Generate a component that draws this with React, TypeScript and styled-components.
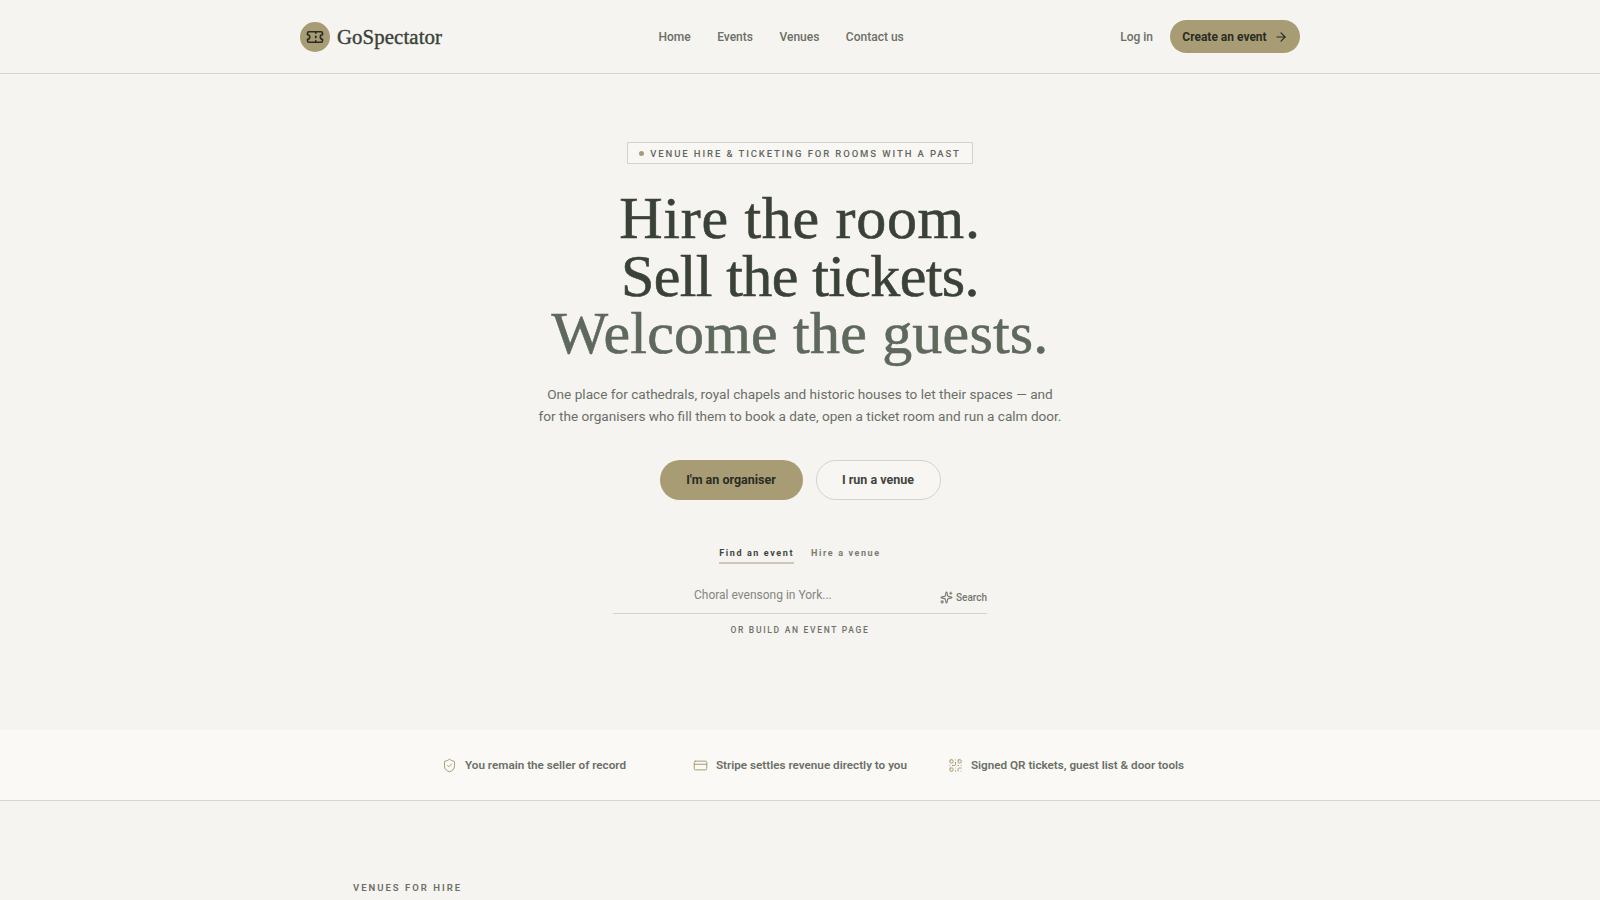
import styled, { createGlobalStyle } from 'styled-components';
import { ArrowRight, CreditCard, QrCode, ShieldCheck, Sparkles, Ticket } from 'lucide-react';

const sans = `Roboto, "Noto Sans", "Liberation Sans", sans-serif`;
const serif = `"Liberation Serif", "DejaVu Serif", serif`;

const GlobalStyle = createGlobalStyle`
  html, body {
    margin: 0;
    padding: 0;
    background: #f5f4f0;
    color: #3a4238;
    font-family: ${sans};
  }
  * {
    box-sizing: border-box;
  }
`;

function App() {
  return (
    <Page>
      <GlobalStyle />
      <Header>
        <HeaderInner>
          <Brand>
            <BrandMark>
              <Ticket size={18} strokeWidth={2.2} />
            </BrandMark>
            <BrandName>GoSpectator</BrandName>
          </Brand>
          <Nav>
            <NavLink>Home</NavLink>
            <NavLink>Events</NavLink>
            <NavLink>Venues</NavLink>
            <NavLink>Contact us</NavLink>
          </Nav>
          <HeaderActions>
            <NavLink>Log in</NavLink>
            <CreateButton>
              Create an event
              <ArrowRight size={14} strokeWidth={2} />
            </CreateButton>
          </HeaderActions>
        </HeaderInner>
      </Header>

      <Hero>
        <Eyebrow>
          <EyebrowDot />
          VENUE HIRE &amp; TICKETING FOR ROOMS WITH A PAST
        </Eyebrow>
        <Headline>
          <HeadlineLine $tracking={0.7}>Hire the room.</HeadlineLine>
          <HeadlineLine $tracking={-0.6}>Sell the tickets.</HeadlineLine>
          <HeadlineLine $tracking={0.2} $soft>
            Welcome the guests.
          </HeadlineLine>
        </Headline>
        <Lead>
          One place for cathedrals, royal chapels and historic houses to let their spaces — and
          <br />
          for the organisers who fill them to book a date, open a ticket room and run a calm door.
        </Lead>
        <HeroButtons>
          <PrimaryButton>I'm an organiser</PrimaryButton>
          <GhostButton>I run a venue</GhostButton>
        </HeroButtons>
        <Tabs>
          <Tab $active>Find an event</Tab>
          <Tab>Hire a venue</Tab>
        </Tabs>
        <SearchRow>
          <SearchPlaceholder>Choral evensong in York...</SearchPlaceholder>
          <SearchButton>
            <Sparkles size={13} strokeWidth={2} />
            Search
          </SearchButton>
        </SearchRow>
        <BuildLink>OR BUILD AN EVENT PAGE</BuildLink>
      </Hero>

      <TrustBand>
        <TrustItem>
          <ShieldCheck size={15} strokeWidth={1.6} />
          You remain the seller of record
        </TrustItem>
        <TrustItem>
          <CreditCard size={15} strokeWidth={1.6} />
          Stripe settles revenue directly to you
        </TrustItem>
        <TrustItem>
          <QrCode size={15} strokeWidth={1.6} />
          Signed QR tickets, guest list &amp; door tools
        </TrustItem>
      </TrustBand>

      <VenuesSection>
        <SectionLabel>VENUES FOR HIRE</SectionLabel>
      </VenuesSection>
    </Page>
  );
}

export default App;

const Page = styled.div`
  height: 900px;
  overflow: hidden;
`;

const Header = styled.header`
  height: 74px;
  border-bottom: 1px solid #d6d4cd;
`;

const HeaderInner = styled.div`
  display: flex;
  align-items: center;
  justify-content: space-between;
  width: 1000px;
  height: 73px;
  margin: 0 auto;
`;

const Brand = styled.div`
  display: flex;
  align-items: center;
  gap: 7px;
`;

const BrandMark = styled.div`
  display: flex;
  align-items: center;
  justify-content: center;
  width: 30px;
  height: 30px;
  border-radius: 50%;
  background: #a89c74;
  color: #2a2c24;
`;

const BrandName = styled.div`
  font-family: ${serif};
  font-size: 20.8px;
  font-weight: 400;
  letter-spacing: 0.1px;
  color: #3a4238;
  -webkit-text-stroke: 0.4px #3a4238;
`;

const Nav = styled.nav`
  display: flex;
  gap: 26.5px;
`;

const NavLink = styled.a`
  font-size: 12px;
  font-weight: 500;
  color: #6b6f67;
`;

const HeaderActions = styled.div`
  display: flex;
  align-items: center;
  justify-content: flex-end;
  gap: 17px;
`;

const CreateButton = styled.button`
  display: flex;
  align-items: center;
  justify-content: center;
  gap: 7px;
  width: 130px;
  height: 33px;
  padding: 0;
  border: 0;
  border-radius: 17px;
  background: #a89c74;
  color: #2a2c24;
  font-family: ${sans};
  font-size: 12px;
  font-weight: 700;
`;

const Hero = styled.section`
  display: flex;
  flex-direction: column;
  align-items: center;
  height: 656px;
  padding-top: 68px;
`;

const Eyebrow = styled.div`
  display: flex;
  align-items: center;
  gap: 6px;
  height: 22px;
  padding: 0 11px;
  border: 1px solid #d4d2ca;
  background: #f8f7f4;
  color: #62665e;
  font-size: 9.5px;
  font-weight: 500;
  letter-spacing: 1.9px;
`;

const EyebrowDot = styled.span`
  width: 5px;
  height: 5px;
  border-radius: 50%;
  background: #a89c74;
`;

const Headline = styled.h1`
  margin: 26px 0 0;
  font-family: ${serif};
  font-size: 60px;
  font-weight: 400;
  line-height: 57.6px;
  text-align: center;
`;

const HeadlineLine = styled.span<{ $tracking: number; $soft?: boolean }>`
  display: block;
  letter-spacing: ${(p) => p.$tracking}px;
  color: ${(p) => (p.$soft ? '#5f685c' : '#3a4238')};
  -webkit-text-stroke: 0.6px ${(p) => (p.$soft ? '#5f685c' : '#3a4238')};
`;

const Lead = styled.p`
  margin: 20px 0 0;
  font-size: 13.6px;
  line-height: 22px;
  text-align: center;
  color: #6b6f67;
`;

const HeroButtons = styled.div`
  display: flex;
  gap: 13px;
  margin-top: 33px;
`;

const PrimaryButton = styled.button`
  width: 143px;
  height: 40px;
  border: 0;
  border-radius: 20px;
  background: #a89c74;
  color: #2a2c24;
  font-family: ${sans};
  font-size: 12.5px;
  font-weight: 700;
`;

const GhostButton = styled.button`
  width: 125px;
  height: 40px;
  border: 1px solid #d4d2ca;
  border-radius: 20px;
  background: #f7f6f2;
  color: #3f453c;
  font-family: ${sans};
  font-size: 12.5px;
  font-weight: 700;
`;

const Tabs = styled.div`
  display: flex;
  gap: 17px;
  margin-top: 47px;
`;

const Tab = styled.div<{ $active?: boolean }>`
  height: 17px;
  border-bottom: ${(p) => (p.$active ? '2px solid #cfc8b6' : '0')};
  color: ${(p) => (p.$active ? '#3f453c' : '#7a7d74')};
  font-size: 9px;
  font-weight: 700;
  line-height: 13px;
  letter-spacing: 1.6px;
`;

const SearchRow = styled.div`
  display: flex;
  align-items: flex-end;
  justify-content: space-between;
  width: 374px;
  height: 50px;
  padding: 0 0 9px 81px;
  border-bottom: 1px solid #d4d2ca;
`;

const SearchPlaceholder = styled.div`
  margin-bottom: 1px;
  color: #84867e;
  font-size: 12px;
  line-height: 16px;
`;

const SearchButton = styled.div`
  display: flex;
  align-items: center;
  gap: 3px;
  color: #74776f;
  font-size: 10px;
  font-weight: 500;
`;

const BuildLink = styled.div`
  margin-top: 11px;
  color: #6f726a;
  font-size: 8.5px;
  font-weight: 500;
  letter-spacing: 1.7px;
`;

const TrustBand = styled.section`
  display: grid;
  grid-template-columns: repeat(3, 250px);
  gap: 16px;
  align-items: center;
  justify-items: center;
  justify-content: center;
  height: 71px;
  border-bottom: 1px solid #d6d4cd;
  background: #faf9f5;
`;

const TrustItem = styled.div`
  display: flex;
  align-items: center;
  gap: 8px;
  white-space: nowrap;
  color: #6b6f67;
  font-size: 11.7px;
  font-weight: 600;

  svg {
    color: #a89c74;
  }
`;

const VenuesSection = styled.section`
  padding: 81px 0 0 353px;
`;

const SectionLabel = styled.div`
  color: #6b6f67;
  font-size: 9.5px;
  font-weight: 600;
  letter-spacing: 2px;
`;
